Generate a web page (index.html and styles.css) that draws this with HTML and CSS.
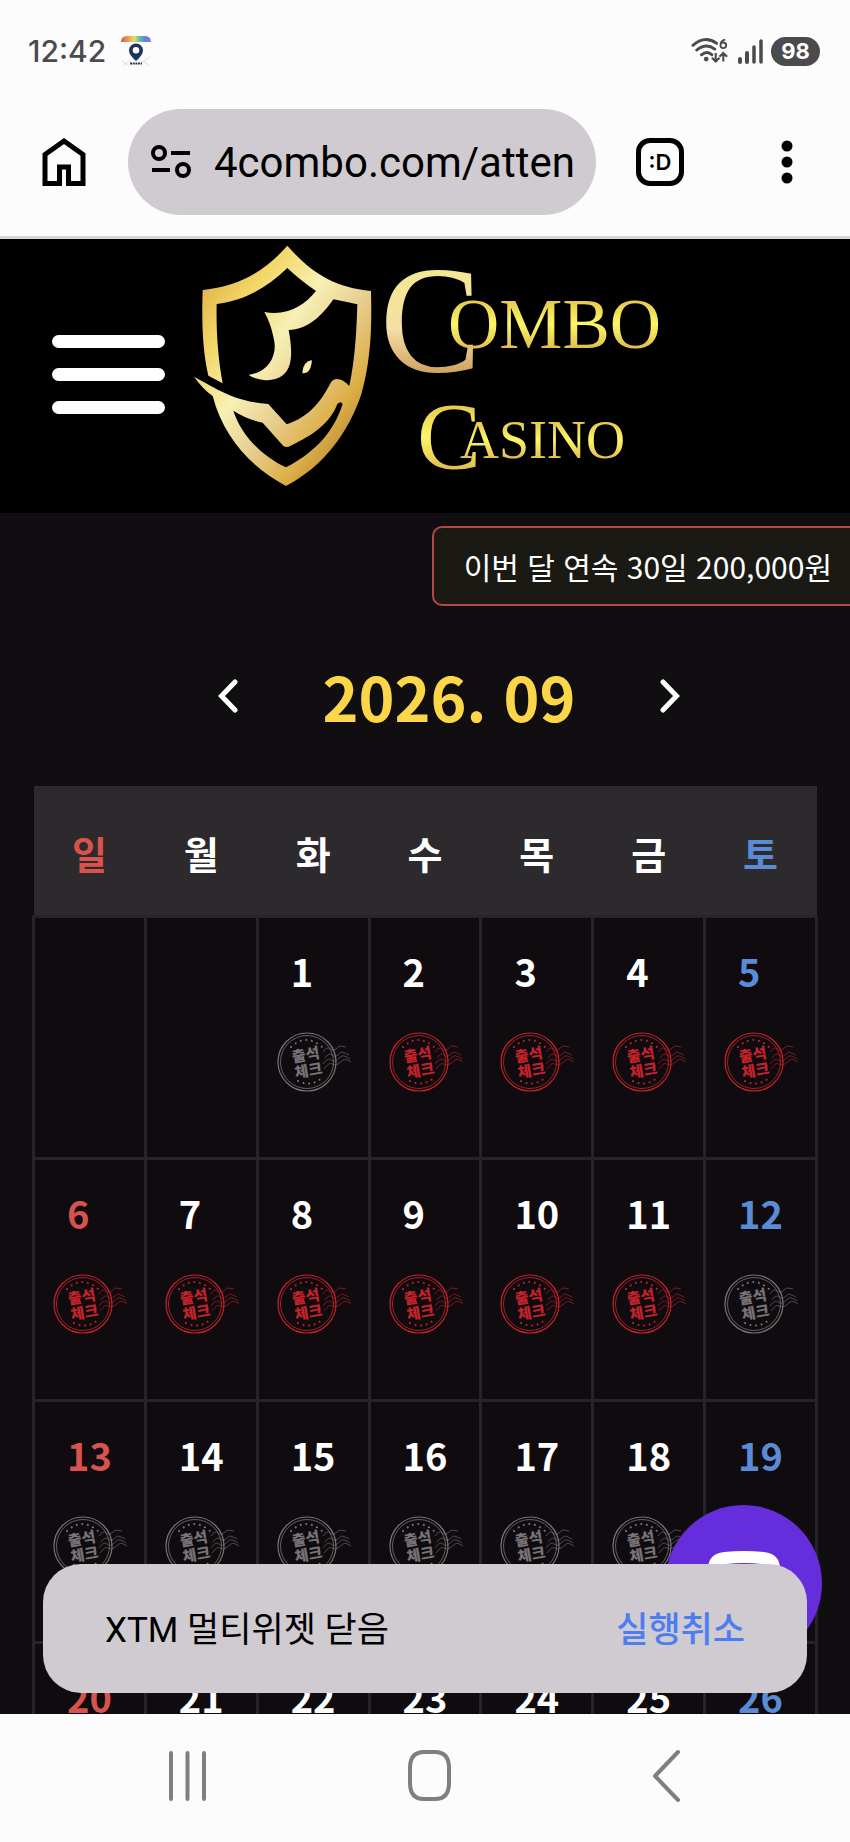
FILE: index.html
```html
<!DOCTYPE html>
<html lang="ko">
<head>
<meta charset="utf-8">
<meta name="viewport" content="width=device-width, initial-scale=1">
<title>Combo Casino</title>
<link rel="stylesheet" href="styles.css">
</head>
<body>
<svg class="defs" aria-hidden="true">
  <symbol id="stamp" viewBox="0 0 76 62">
    <g fill="none" stroke="currentColor">
      <circle cx="30" cy="31" r="29" stroke-width="1.2"/>
      <circle cx="30" cy="31" r="26.5" stroke-width=".8"/>
      <path stroke-width=".8" opacity=".75" d="M46 21q4-6 7-3t6 0 4-3 6 1M48 27q4-6 7-3t6 0 4-3 7 3M46 33q5-7 8-4t6 0 5-4 8 3M47 38q5-7 8-5t6 0 5-4 8 2"/>
      <path stroke-width="2" stroke-linecap="round" stroke-dasharray=".1 5.6" d="M14 16q15-14 31 0M21 50q14 7 26-5"/>
    </g>
    <g class="stamp-text" transform="rotate(-10 30 31)" fill="currentColor" text-anchor="middle">
      <text x="30" y="29">출석</text>
      <text x="30" y="45">체크</text>
    </g>
  </symbol>
</svg>

<header class="status">
  <div class="status-side">
    <time class="clock">12:42</time>
    <svg width="32" height="32" viewBox="0 0 32 32" aria-hidden="true">
      <defs><linearGradient id="rainbow"><stop offset="0" stop-color="#d9534c"/><stop offset=".25" stop-color="#eda253"/><stop offset=".45" stop-color="#dce06a"/><stop offset=".6" stop-color="#68c69b"/><stop offset=".8" stop-color="#5b83e8"/><stop offset="1" stop-color="#a66be0"/></linearGradient></defs>
      <path fill="url(#rainbow)" d="M1 7Q1 1 7 1h18q6 0 6 6z"/>
      <path d="M2 26l7 5m-6 0 8-6m10 3 9-6m-7 4 7 5" stroke="#ddd" fill="none"/>
      <path fill="#1d355e" fill-rule="evenodd" d="M16 26Q9 20 9 15.500a7 7 0 0 1 14 0Q23 20 16 26zm0-14a3.300 3.300 0 1 0 0 6.600 3.300 3.300 0 0 0 0-6.600z"/>
      <path stroke="#333" stroke-width="2" stroke-dasharray="2 .7" d="M10 28.500h12"/>
    </svg>
  </div>
  <div class="status-side status-right">
    <svg width="38" height="30" viewBox="0 0 40 30" fill="none" stroke="#4b4a4d" aria-hidden="true">
      <path stroke-width="3" stroke-linecap="round" d="M2 9q13-11 25-2M6 14q10-8 19-1M11 19q6-5 11 0"/>
      <circle cx="16" cy="23.500" r="2.500" fill="#4b4a4d" stroke="none"/>
      <path stroke-width="2.200" d="M26 17v9m-4-4 4 4 4-4M34 26v-9m-4 4 4-4 4 4"/>
      <path stroke-width="2" d="M36 3q-5 1-5 6a3 3 0 1 0 3-3q-2 0-3 2"/>
    </svg>
    <svg width="26" height="28" viewBox="0 0 26 28" stroke="#4b4a4d" stroke-width="4" stroke-linecap="round" aria-hidden="true"><path d="M3 22v3M10 16v9"/><path d="M17 10v15M24 4v21" stroke-width="3.500"/></svg>
    <span class="battery">98</span>
  </div>
</header>

<nav class="browser" aria-label="브라우저">
  <button class="icon-btn" aria-label="홈">
    <svg width="44" height="50" viewBox="0 0 44 50" fill="none" stroke="#000" stroke-width="5"><path d="M3 46.500V17.500L22 4l19 13.500v29H26.500V30h-9v16.500z"/></svg>
  </button>
  <div class="address">
    <svg width="42" height="36" viewBox="0 0 42 36" fill="none" stroke="#000" stroke-width="4" aria-hidden="true"><circle cx="9" cy="9" r="6"/><circle cx="33" cy="26" r="6"/><path d="M21 9h19M2 26h18"/></svg>
    <input class="url" type="text" aria-label="주소" value="4combo.com/atten">
  </div>
  <button class="tabs" aria-label="탭">:D</button>
  <button class="icon-btn" aria-label="메뉴">
    <svg width="12" height="44" viewBox="0 0 12 44"><circle cx="6" cy="6" r="5.500"/><circle cx="6" cy="22" r="5.500"/><circle cx="6" cy="38" r="5.500"/></svg>
  </button>
</nav>

<div class="viewport">
  <header class="site-head">
    <button class="burger" aria-label="전체 메뉴"><span></span><span></span><span></span></button>
    <svg class="logo" viewBox="190 239 475 274" role="img" aria-label="Combo Casino">
      <defs>
        <linearGradient id="shield" x1="0" y1="0" x2="1" y2="1"><stop offset="0" stop-color="#d79c3c"/><stop offset=".25" stop-color="#f2d665"/><stop offset=".43" stop-color="#f7f0b4"/><stop offset=".58" stop-color="#e9cf92"/><stop offset=".75" stop-color="#dcae45"/><stop offset="1" stop-color="#8f6128"/></linearGradient>
        <linearGradient id="pale" x1="0" y1="0" x2="0" y2="1"><stop offset="0" stop-color="#f4ed8a"/><stop offset=".55" stop-color="#f3dfa2"/><stop offset="1" stop-color="#b87431"/></linearGradient>
        <linearGradient id="gold" x1="0" y1="0" x2="0" y2="1"><stop offset=".2" stop-color="#e6c94c"/><stop offset=".5" stop-color="#fbf767"/><stop offset=".85" stop-color="#dfb54c"/></linearGradient>
      </defs>
      <g transform="translate(0 230) scale(.33333)" fill="url(#shield)">
        <path fill-rule="evenodd" d="M862 47C930 125 1000 172 1113 183C1116 300 1112 390 1085 490C1045 610 970 710 858 768C750 710 670 620 638 498C620 485 600 465 582 440C640 470 700 515 805 522L860 583C930 560 965 510 990 462C1000 440 1025 442 1048 468C1065 390 1070 300 1072 223Q1035 215 1000 208C965 260 920 300 866 300C885 400 870 450 795 451Q765 448 746 435C810 425 835 370 820 320Q812 280 793 246C860 260 915 225 948 183Q900 150 862 114C800 175 730 212 650 222C648 310 655 390 668 460L625 437C607 360 605 270 608 180C710 170 790 130 862 47ZM700 542Q745 570 788 578L850 648Q860 655 872 647C940 615 990 580 1012 522Q1022 512 1028 522C1000 610 940 670 858 712C790 680 725 620 700 542Z"/>
        <path fill="#f5ecb0" d="M935 390Q908 395 907 430Q930 432 935 400Z"/>
      </g>
      <g class="logo-text">
        <text x="380" y="372" font-size="152" fill="url(#pale)">C</text>
        <text x="448" y="348" font-size="71" fill="url(#gold)">OMBO</text>
        <text x="417" y="469" font-size="96" fill="url(#gold)">C</text>
        <text x="460" y="458" font-size="54" fill="url(#gold)">ASINO</text>
      </g>
    </svg>
  </header>

  <main class="content">
    <p class="notice">이번 달 연속 30일 200,000원</p>
    <div class="month">
      <button class="icon-btn" aria-label="이전 달"><svg width="20" height="34" viewBox="0 0 20 34" fill="none" stroke="#fff" stroke-width="5" stroke-linecap="round"><path d="M17 3 3.500 17 17 31"/></svg></button>
      <h1>2026. 09</h1>
      <button class="icon-btn" aria-label="다음 달"><svg width="20" height="34" viewBox="0 0 20 34" fill="none" stroke="#fff" stroke-width="5" stroke-linecap="round"><path d="M3 3l13.500 14L3 31"/></svg></button>
    </div>
    <table class="calendar">
      <thead><tr><th>일</th><th>월</th><th>화</th><th>수</th><th>목</th><th>금</th><th>토</th></tr></thead>
      <tbody>
        <tr>
          <td></td><td></td>
          <td><b>1</b><svg class="stamp"><use href="#stamp"/></svg></td>
          <td><b>2</b><svg class="stamp on"><use href="#stamp"/></svg></td>
          <td><b>3</b><svg class="stamp on"><use href="#stamp"/></svg></td>
          <td><b>4</b><svg class="stamp on"><use href="#stamp"/></svg></td>
          <td><b>5</b><svg class="stamp on"><use href="#stamp"/></svg></td>
        </tr>
        <tr>
          <td><b>6</b><svg class="stamp on"><use href="#stamp"/></svg></td>
          <td><b>7</b><svg class="stamp on"><use href="#stamp"/></svg></td>
          <td><b>8</b><svg class="stamp on"><use href="#stamp"/></svg></td>
          <td><b>9</b><svg class="stamp on"><use href="#stamp"/></svg></td>
          <td><b>10</b><svg class="stamp on"><use href="#stamp"/></svg></td>
          <td><b>11</b><svg class="stamp on"><use href="#stamp"/></svg></td>
          <td><b>12</b><svg class="stamp"><use href="#stamp"/></svg></td>
        </tr>
        <tr>
          <td><b>13</b><svg class="stamp"><use href="#stamp"/></svg></td>
          <td><b>14</b><svg class="stamp"><use href="#stamp"/></svg></td>
          <td><b>15</b><svg class="stamp"><use href="#stamp"/></svg></td>
          <td><b>16</b><svg class="stamp"><use href="#stamp"/></svg></td>
          <td><b>17</b><svg class="stamp"><use href="#stamp"/></svg></td>
          <td><b>18</b><svg class="stamp"><use href="#stamp"/></svg></td>
          <td><b>19</b></td>
        </tr>
        <tr><td><b>20</b></td><td><b>21</b></td><td><b>22</b></td><td><b>23</b></td><td><b>24</b></td><td><b>25</b></td><td><b>26</b></td></tr>
      </tbody>
    </table>
  </main>

  <button class="chat" aria-label="채팅">
    <svg width="72" height="66" viewBox="0 0 72 66"><path fill="#fff" fill-rule="evenodd" d="M16 1Q36-1 56 1Q72 3 72 18V38Q72 52 56 53H40L24 65V53H16Q0 52 0 38V18Q0 3 16 1ZM18 13Q12 14 12 20V36Q12 42 18 42H54Q60 42 60 36V20Q60 14 54 13Q36 11 18 13Z"/></svg>
  </button>

  <div class="snackbar" role="status">
    <span>XTM 멀티위젯 닫음</span>
    <button class="undo">실행취소</button>
  </div>
</div>

<nav class="system" aria-label="시스템">
  <button class="icon-btn" aria-label="최근 앱"><svg width="40" height="54" viewBox="0 0 40 54" stroke="#807e81" stroke-width="4" stroke-linecap="round"><path d="M3 4v46M19.500 4v46M36 4v46"/></svg></button>
  <button class="icon-btn" aria-label="홈 화면"><svg width="44" height="54" viewBox="0 0 44 54" fill="none" stroke="#807e81" stroke-width="4"><path d="M16 3h11q14 0 14 16v15q0 16-14 16H16Q2 50 2 34V19Q2 3 16 3z"/></svg></button>
  <button class="icon-btn" aria-label="뒤로"><svg width="30" height="54" viewBox="0 0 30 54" fill="none" stroke="#807e81" stroke-width="4" stroke-linecap="round" stroke-linejoin="round"><path d="M26 3 3 27l23 24"/></svg></button>
</nav>
</body>
</html>
```
FILE: styles.css
```css
* { box-sizing: border-box; }

body {
  margin: 0;
  height: 100vh;
  display: flex;
  flex-direction: column;
  overflow: hidden;
  background: #fdfcfd;
  color: #000;
  font-family: "Noto Sans CJK KR", sans-serif;
}

svg { display: block; flex: none; }
.defs { position: absolute; width: 0; height: 0; }

button {
  margin: 0;
  padding: 0;
  border: 0;
  background: none;
  color: inherit;
  font: inherit;
}

.icon-btn { display: flex; }

.status {
  flex: none;
  height: 102px;
  padding: 0 30px 0 28px;
  display: flex;
  justify-content: space-between;
  align-items: center;
}
.status-side { display: flex; align-items: center; gap: 14px; }
.status-right { gap: 8px; }
.clock { font: 500 30px/40px Inter, sans-serif; color: #4b4a4d; }
.battery {
  width: 49px;
  border-radius: 15px;
  background: #4b4a4d;
  color: #fff;
  font: 700 22px/29px Inter, sans-serif;
  text-align: center;
}

.browser {
  flex: none;
  height: 137px;
  padding: 0 57px 14px 42px;
  display: flex;
  align-items: center;
  border-bottom: 3px solid #d8d6d8;
}
.address {
  flex: 1;
  min-width: 0;
  height: 106px;
  margin: 0 40px 0 42px;
  padding: 0 20px 0 22px;
  display: flex;
  align-items: center;
  gap: 22px;
  border-radius: 53px;
  background: #cfcbd0;
}
.url {
  flex: 1;
  min-width: 0;
  padding: 2px 0 0;
  border: 0;
  background: none;
  color: #000;
  font: 400 42px/56px Roboto, sans-serif;
}
.tabs {
  width: 48px;
  height: 48px;
  margin-right: 97px;
  border: 5px solid #000;
  border-radius: 14px;
  font: 600 22px/36px Inter, sans-serif;
}

.viewport {
  position: relative;
  flex: 1;
  min-height: 0;
  overflow: hidden;
  background: #110e11;
  color: #fff;
}

.site-head {
  height: 274px;
  padding-left: 52px;
  display: flex;
  align-items: center;
  gap: 25px;
  background: #000;
}
.burger {
  width: 113px;
  padding-bottom: 4px;
  display: grid;
  gap: 20px;
}
.burger span { height: 13px; border-radius: 7px; background: #fff; }
.logo { width: 475px; height: 274px; }
.logo-text { font-family: "Liberation Serif", serif; }

.content { padding: 13px 32px 0; }
.notice {
  width: fit-content;
  margin: 0 -48px 0 auto;
  padding: 0 32px 0 30px;
  border: 2px solid #b14946;
  border-radius: 10px;
  background: #1a1914;
  font-size: 30px;
  line-height: 76px;
  white-space: nowrap;
}
.month {
  max-width: 510px;
  margin: 44px auto;
  padding-left: 48px;
  display: flex;
  align-items: center;
  justify-content: space-between;
}
.month h1 {
  margin: 0;
  color: #fad648;
  font-size: 61px;
  font-weight: 700;
  line-height: 92px;
}

.calendar {
  width: 100%;
  border-collapse: collapse;
  table-layout: fixed;
  background: #0f0b0e;
}
.calendar th {
  height: 130px;
  padding: 4px 0 0;
  background: #2d2a2d;
  font-size: 38px;
  font-weight: 700;
}
.calendar td {
  height: 242px;
  padding: 31px 0 0 18px;
  border: 3px solid #272427;
  vertical-align: top;
}
.calendar b {
  display: block;
  padding-left: 14px;
  font-size: 38px;
  font-weight: 700;
  line-height: 44px;
}
.calendar tr > :first-child { color: #d8524e; }
.calendar tr > :last-child { color: #5a8bd6; }
.calendar .stamp { width: 76px; height: 62px; margin-top: 38px; color: #777377; }
.calendar .on { color: #c4232b; }
.stamp-text { font-size: 15px; font-weight: 900; }

.chat {
  position: absolute;
  right: 28px;
  bottom: 52px;
  width: 157px;
  height: 157px;
  display: grid;
  place-items: center;
  border-radius: 50%;
  background: #662ddc;
}

.snackbar {
  position: absolute;
  left: 43px;
  right: 43px;
  bottom: 21px;
  height: 129px;
  padding: 0 62px 4px;
  display: flex;
  align-items: center;
  justify-content: space-between;
  border-radius: 38px;
  background: #cfcbd0;
  color: #000;
  font-size: 35px;
  font-family: Roboto, "Noto Sans CJK KR", sans-serif;
}
.undo { color: #4d7df0; font-weight: 500; }

.system {
  flex: none;
  height: 128px;
  padding: 0 168px 4px;
  display: flex;
  align-items: center;
  justify-content: space-between;
}
```
